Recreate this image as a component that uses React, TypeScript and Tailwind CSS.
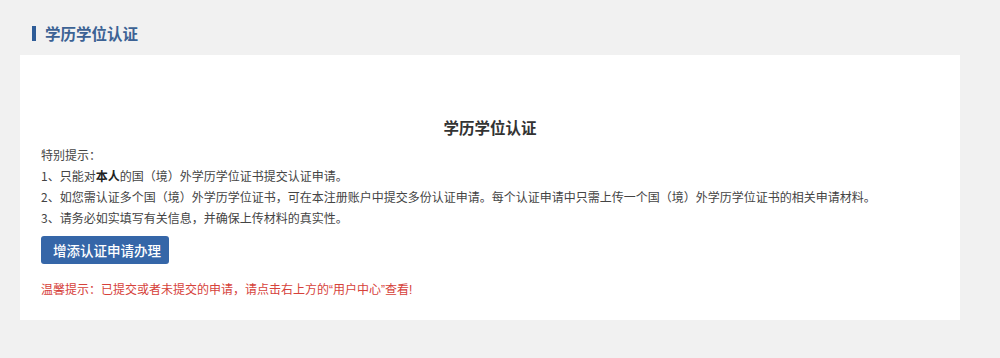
const notices = [
  <>1、只能对<span className="font-bold text-[#222]">本人</span>的国（境）外学历学位证书提交认证申请。</>,
  <>2、如您需认证多个国（境）外学历学位证书，可在本注册账户中提交多份认证申请。每个认证申请中只需上传一个国（境）外学历学位证书的相关申请材料。</>,
  <>3、请务必如实填写有关信息，并确保上传材料的真实性。</>,
];

export default function App() {
  return (
    <div className="min-h-[358px] bg-[#f1f1f1] pt-[24px] font-['Noto_Sans_CJK_SC',sans-serif]">
      <div className="flex h-[18px] items-center gap-[9px] pl-[32px]">
        <span className="h-[15px] w-[4px] bg-[#2f5d98]" />
        <span className="text-[15.5px] font-bold leading-[18px] text-[#3c6294]">学历学位认证</span>
      </div>

      <div className="mx-[20px] mt-[13px] w-[940px] bg-white px-[21px] pb-[20px] pt-[61px]">
        <h2 className="text-center text-[15.5px] font-bold leading-[22px] text-[#333]">学历学位认证</h2>

        <div className="mt-[6px] text-[12px] leading-[21px] text-[#444]">
          <p>特别提示：</p>
          {notices.map((n, i) => (
            <p key={i}>{n}</p>
          ))}
        </div>

        <button className="mt-[8px] h-[28px] w-[128px] rounded-[3px] bg-[#3566a8] pl-[12px] text-left text-[13.5px] font-medium text-white">
          增添认证申请办理
        </button>

        <p className="mt-[15px] text-[12px] leading-[20px] text-[#d6413a]">
          温馨提示：已提交或者未提交的申请，请点击右上方的
          <span className="font-['Liberation_Sans',sans-serif]">“</span>用户中心
          <span className="font-['Liberation_Sans',sans-serif]">”</span>查看
          <span className="font-['Liberation_Sans',sans-serif]">!</span>
        </p>
      </div>
    </div>
  );
}
